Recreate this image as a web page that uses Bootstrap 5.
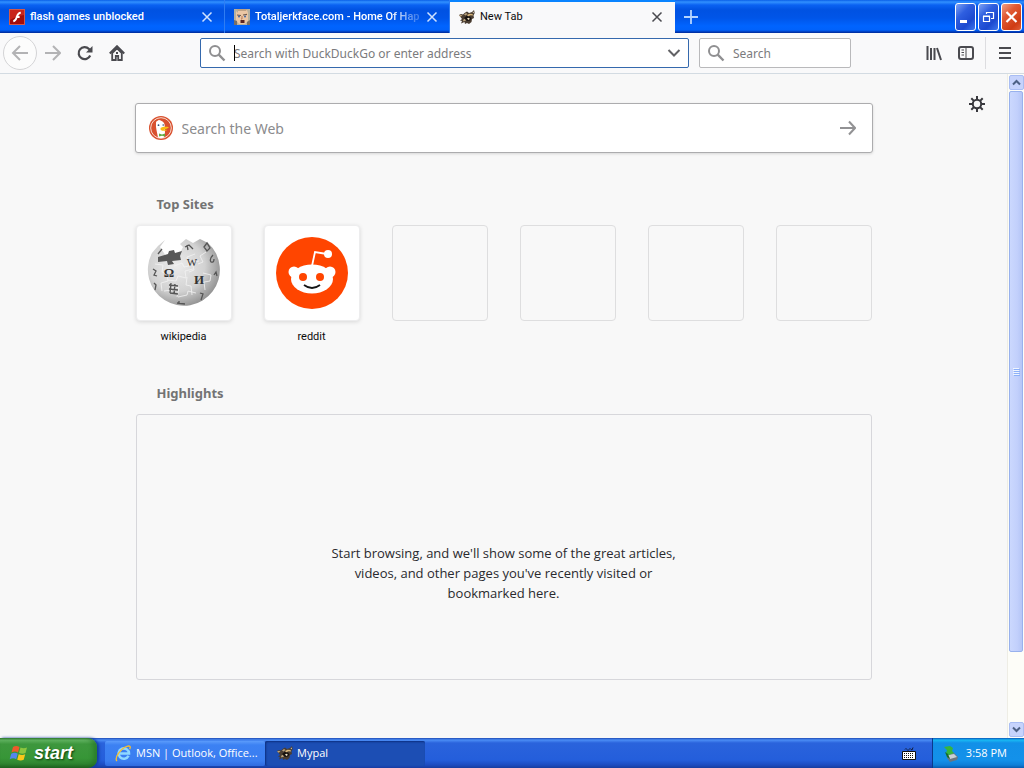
<!DOCTYPE html>
<html lang="en">
<head>
<meta charset="utf-8">
<meta name="viewport" content="width=device-width, initial-scale=1">
<title>New Tab</title>
<link rel="stylesheet" href="https://cdn.jsdelivr.net/npm/bootstrap@5.3.0/dist/css/bootstrap.min.css">
<style>
  body { font-family: "Noto Sans", "Open Sans", sans-serif; font-size: 12px; line-height: 16px; background: #f8f8f8; color: #0c0c0d; }
  button { font: inherit; }
  svg { display: block; flex: none; }
  .plain { background: none; border: 0; padding: 0; color: inherit; display: flex; align-items: center; justify-content: center; }
  .ui { font-family: "Open Sans", "Noto Sans", sans-serif; font-size: 11px; line-height: 16px; white-space: nowrap; }
  .ui.slim { font-family: Roboto, "Open Sans", sans-serif; }

  .tabstrip { height: 33px; background: linear-gradient(#0a5fe8 0, #3190ff 2px, #0a62f2 5px, #0052e2 10px, #0055e8 18px, #0064ff 26px, #0062fb 30px, #0038b4 32px, #002a98 33px); }
  .tab { width: 225px; height: 33px; padding: 1px 11px 0 9px; color: #fff; border-right: 1px solid #2f7df2; }
  .tab .name { flex: 1 1 0; min-width: 0; font-weight: 500; padding-left: 5px; }
  .tab .fade-end { -webkit-mask-image: linear-gradient(90deg, #000 80%, #0004 94%); mask-image: linear-gradient(90deg, #000 80%, #0004 94%); }
  .tab.on { background: #f9f9fa; color: #0c0c0d; border-top: 2px solid #0a84ff; border-right: 0; padding: 0 12px 2px 9px; }
  .tab.on .name { font-weight: 400; }
  .tab .plain { color: #cfe2ff; }
  .tab.on .plain { color: #4a4a4f; }
  .winbtns { gap: 2px; padding-right: 2px; }
  .winbtn { width: 21px; height: 28px; border: 1px solid #fff; border-radius: 3px; background: linear-gradient(135deg, #7ea2f4, #2f5fe0 35%, #1c49cf 70%, #3c77ee); color: #fff; }
  .winbtn.shut { background: linear-gradient(135deg, #f0a088, #e05a34 35%, #cf3c14 75%, #e0603a); }

  .toolbar { height: 41px; background: #f9f9fa; border-bottom: 1px solid #d3dbe2; color: #4a4a4f; padding: 0 3px; }
  .back { width: 34px; height: 34px; border: 1px solid #d4d4d6; border-radius: 50%; background: #fcfcfc; color: #b3b3b5; }
  .forward { color: #b3b3b5; }
  .field { height: 30px; background: #fff; border: 1px solid #b9b9bb; border-radius: 2px; padding: 0 7px; }
  .field input, .websearch input { border: 0; outline: 0; padding: 2px 0 0; background: none; min-width: 0; flex: 1; }
  .field input::placeholder { color: #7b7b7d; opacity: 1; }
  .field.active { border-color: #3569ad; margin-left: 75px; }
  .field.finder { width: 152px; flex: none; margin: 0 10px; }
  .caret { position: absolute; left: 0; top: 1px; width: 1px; height: 16px; background: #000; }
  .tools { padding-left: 65px; }
  .rule { width: 1px; height: 32px; margin: 0 11px; background: #dddde0; }

  .gear { color: #38383d; margin: 22px 22px 0 0; }
  .page-col { width: 738px; max-width: 80%; padding-top: 29px; }
  .websearch { height: 50px; background: #fff; border: 1px solid #acacae; border-radius: 3px; box-shadow: 0 1px 3px #0002; padding: 0 16px 0 13px; }
  .websearch input { font-size: 14px; padding-left: 9px; }
  .websearch input::placeholder { color: #8b8b8d; opacity: 1; }
  section { margin-top: 42px; }
  section + section { margin-top: 39px; }
  h2 { font-size: 13px; line-height: 18px; font-weight: 700; color: #737373; margin: 0 0 12px; padding-left: 22px; }
  .sites { display: grid; grid-template-columns: repeat(6, 96px); justify-content: space-between; padding: 0 1px; }
  .tile { height: 96px; border: 1px solid #dededf; border-radius: 4px; display: flex; align-items: center; justify-content: center; }
  .tile.full { background: #fff; border-color: #ededee; box-shadow: 0 1px 4px #0002; }
  .site { color: #0c0c0d; text-decoration: none; text-align: center; }
  .highlights { min-height: 266px; border: 1px solid #d7d7db; border-radius: 3px; margin: 0 1px; }
  .highlights p { font-family: "Open Sans", "Noto Sans", sans-serif; font-size: 13px; width: 350px; line-height: 20px; margin: 52px 0 0; color: #2a2a2e; }

  .scroll { width: 17px; background: #fdfdf8; border-left: 1px solid #eeede5; padding: 1px 0 1px 1px; }
  .scroll button { height: 15px; width: 15px; background: #c6d3fc; border: 1px solid #a9bdf3; border-radius: 2px; color: #4d6185; }
  .thumb { flex: 88 1 0; width: 14px; margin-top: 1px; border: 1px solid #98b1ed; border-radius: 2px; background: linear-gradient(90deg, #cbd8fe, #c2d0fc 60%, #b5c6f6); }
  .groove { flex: 11 1 0; }

  .taskbar { height: 30px; color: #fff; background: linear-gradient(#1f4bb5 0, #4b8df5 2px, #2a63dc 5px, #245edb 22px, #1d4cc0 27px, #173c9e 30px); }
  .start { width: 97px; height: 30px; color: #fff; border-radius: 0 9px 9px 0; padding: 0 0 0 9px; background: linear-gradient(#327a32 0, #63b563 2px, #3d973d 6px, #379637 20px, #2e8430 26px, #1d5f1e 30px); box-shadow: inset -4px 0 4px #1f6c2088, 2px 0 3px #123c9c; font: italic bold 18px/28px "Liberation Sans", sans-serif; text-shadow: 1px 1px 2px #0a3a0a; }
  .task { width: 160px; height: 25px; color: #fff; border-radius: 2px; padding: 0 0 0 10px; background: linear-gradient(#5b9bfb 0, #3c81f3 4px, #3a7df0 20px, #2f6be0 25px); }
  .task.on { background: #1c4eb4; box-shadow: inset 1px 1px 2px #0c2f80; }
  .task.on { padding-left: 12px; }
  .tray { width: 92px; height: 30px; padding: 0 17px 0 9px; border-left: 1px solid #0a3a8c; background: linear-gradient(#0a55b8 0, #19b9f3 2px, #1290e8 5px, #1391ea 22px, #0f7fd8 27px, #095bae 30px); }
</style>
</head>
<body class="d-flex flex-column min-vh-100">

<svg width="0" height="0" class="position-absolute" aria-hidden="true">
  <symbol id="x" viewBox="0 0 12 12"><path d="M1.500 1.500l9 9m0-9l-9 9" fill="none" stroke="currentColor" stroke-width="1.500"/></symbol>
  <symbol id="lens" viewBox="0 0 18 18"><circle cx="7" cy="7" r="5" fill="none" stroke="#8f8f91" stroke-width="2"/><path d="M10.700 10.700l5.800 5.800" stroke="#8f8f91" stroke-width="2.400"/></symbol>
  <symbol id="raccoon" viewBox="0 0 16 16">
    <path d="M0 6l2-1 2 .5L5.500 4 8 2.500 10 4l3-1 2-2 .7 3-1.200 2.500.5 2.500-2 1-.5 3-2.500 2-2-1-2 1-.5-2L2 14.500 3 12l-2-.5 2-1.500z" fill="#4a3d31"/>
    <path d="M0 6.500l2-.8 1.500.8-2 1.200zM4 11l2-1.500 1 2-2.500 1zM5 5.500l2-1.500 1.500 1-2 1.500z" fill="#b9a27c"/>
    <path d="M5 9l2.500-2 3.500.5 1.500 2-1.500 2-3 .5z" fill="#17120f"/>
    <path d="M8 6l2.500-1.300 3 .3.500 1.500-2.500-.2-2.300 1z" fill="#d9b77b"/>
    <path d="M13.500 3.500l1.200-1 .1 1.700zM8 9.300l2-.6.800 1.200-1.500 1z" fill="#efe2c4"/>
  </symbol>
</svg>

<header>
  <div class="tabstrip d-flex ui slim">
    <div class="tab d-flex align-items-center">
      <svg width="16" height="16" viewBox="0 0 16 16"><rect x=".5" y=".5" width="15" height="15" fill="#a30d0a" stroke="#d25a4b"/><path d="M1 1h14v5Q7 7 1 11z" fill="#c8241b"/><path d="M11.800 3.700C8.800 3.800 8.300 6.400 7.600 8.500 7 10.600 6.400 11.900 4.300 12.300M7 8h3.600" fill="none" stroke="#fff" stroke-width="1.900"/></svg>
      <span class="name">flash games unblocked</span>
      <button class="plain" aria-label="Close tab"><svg width="12" height="12"><use href="#x"/></svg></button>
    </div>
    <div class="tab d-flex align-items-center">
      <svg width="16" height="16" viewBox="0 0 16 16"><path fill="#b5b0a0" d="M0 0h16v16H0z"/><path d="M2 2l2 2V1h9l1 3v8l-3 3H5l-3-4z" fill="#ecc7a5"/><path d="M3 0h10l-1 2H4z" fill="#c0a284"/><path d="M3 6l4 .5M9 6l4-.6" stroke="#6f5a4c" stroke-width="1.200"/><circle cx="5" cy="7.600" r="1" fill="#3e64a4"/><circle cx="11" cy="7.600" r="1" fill="#3e64a4"/><path d="M8 7v3H7" fill="none" stroke="#b67958"/><path d="M6.500 11h4v3h-4z" fill="#5b2421"/><path d="M0 11l3 1v4H0zM16 11l-3 2v3h3z" fill="#786f68"/></svg>
      <span class="name fade-end">Totaljerkface.com - Home Of Hap</span>
      <button class="plain" aria-label="Close tab"><svg width="12" height="12"><use href="#x"/></svg></button>
    </div>
    <div class="tab on d-flex align-items-center">
      <svg width="16" height="16"><use href="#raccoon"/></svg>
      <span class="name">New Tab</span>
      <button class="plain" aria-label="Close tab"><svg width="12" height="12"><use href="#x"/></svg></button>
    </div>
    <button class="plain px-2" aria-label="Open a new tab"><svg width="16" height="16" viewBox="0 0 16 16"><path d="M8 1v14M1 8h14" stroke="#b5d4ff" stroke-width="1.800"/></svg></button>
    <div class="winbtns d-flex align-items-center ms-auto flex-shrink-0">
      <button class="plain winbtn" aria-label="Minimize"><svg width="19" height="26" viewBox="0 0 19 26"><path d="M4 16h7v3H4z" fill="#fff"/></svg></button>
      <button class="plain winbtn" aria-label="Restore"><svg width="19" height="26" viewBox="0 0 19 26"><path d="M7.500 10V8.500h7v6H12M4.500 12.500h6v5h-6zM4 12h7M7 8.500h8" fill="none" stroke="#fff" stroke-width="1.200"/></svg></button>
      <button class="plain winbtn shut" aria-label="Close"><svg width="19" height="26" viewBox="0 0 19 26"><path d="M4.500 8l10 10m0-10l-10 10" stroke="#fff" stroke-width="2.200"/></svg></button>
    </div>
  </div>

  <nav class="toolbar d-flex align-items-center" aria-label="Browser">
    <button class="plain back" aria-label="Back"><svg width="18" height="16" viewBox="0 0 18 16"><path d="M9 1L2 8l7 7M2 8h15" fill="none" stroke="currentColor" stroke-width="2"/></svg></button>
    <button class="plain forward ms-2" aria-label="Forward"><svg width="16" height="16" viewBox="0 0 16 16"><path d="M8 1l7 7-7 7M15 8H0" fill="none" stroke="currentColor" stroke-width="2"/></svg></button>
    <button class="plain ms-3" aria-label="Reload"><svg width="16" height="16" viewBox="0 0 16 16"><path d="M13.200 10.500A6 6 0 1 1 12 4l1.500 1.500" fill="none" stroke="currentColor" stroke-width="2.200"/><path d="M15.500 1v6.500H9z" fill="currentColor"/></svg></button>
    <button class="plain ms-3" aria-label="Home"><svg width="16" height="16" viewBox="0 0 16 16"><path d="M.8 8.500L8 1.300l7.200 7.200" fill="none" stroke="currentColor" stroke-width="2.100"/><path d="M3.200 8v7h3.600v-4h2.400v4h3.600V8L8 3.400z" fill="none" stroke="currentColor" stroke-width="1.800"/><path d="M7 7h2v2H7z" fill="currentColor"/></svg></button>
    <div class="field active d-flex align-items-center flex-grow-1">
      <svg width="18" height="18"><use href="#lens"/></svg>
      <div class="d-flex flex-grow-1 position-relative ms-2"><input type="text" aria-label="Address" placeholder="Search with DuckDuckGo or enter address"><span class="caret"></span></div>
      <button class="plain" aria-label="Show history"><svg width="14" height="10" viewBox="0 0 14 10"><path d="M1.500 2L7 7.500 12.500 2" fill="none" stroke="#626265" stroke-width="2"/></svg></button>
    </div>
    <div class="field finder d-flex align-items-center">
      <svg width="18" height="18"><use href="#lens"/></svg>
      <input type="text" class="ms-1 ps-1" aria-label="Search" placeholder="Search">
    </div>
    <div class="tools d-flex align-items-center">
      <button class="plain" aria-label="Library"><svg width="16" height="16" viewBox="0 0 16 16"><path d="M1.500 1v14M5 3v12M8.500 3v12M11 3l4 12" fill="none" stroke="currentColor" stroke-width="2"/></svg></button>
      <button class="plain ms-3" aria-label="Sidebars"><svg width="16" height="16" viewBox="0 0 16 16"><rect x="1" y="2" width="14" height="12" rx="2" fill="none" stroke="currentColor" stroke-width="2"/><path d="M8 2v12M3.500 5H6M3.500 7.500H6M3.500 10H6" stroke="currentColor"/></svg></button>
      <span class="rule"></span>
      <button class="plain me-2" aria-label="Menu"><svg width="16" height="16" viewBox="0 0 16 16"><path d="M2 3h12M2 8h12M2 13h12" stroke="currentColor" stroke-width="2"/></svg></button>
    </div>
  </nav>
</header>

<div class="d-flex flex-grow-1">
  <main class="flex-grow-1 position-relative">
    <button class="plain gear position-absolute top-0 end-0" aria-label="Settings"><svg width="16" height="16" viewBox="0 0 16 16"><circle cx="8" cy="8" r="4.200" fill="none" stroke="currentColor" stroke-width="2"/><path d="M8 0v4M8 12v4M0 8h4M12 8h4M2.300 2.300l2.800 2.800M10.900 10.900l2.800 2.800M13.700 2.300l-2.800 2.800M5.100 10.900l-2.800 2.800" stroke="currentColor" stroke-width="2"/></svg></button>
    <div class="page-col mx-auto">
      <form class="websearch d-flex align-items-center" onsubmit="return false">
        <svg width="24" height="24" viewBox="0 0 24 24"><circle cx="12" cy="12" r="12" fill="#d9512f"/><circle cx="12" cy="12" r="10.300" fill="none" stroke="#f6d9cd" stroke-width="1"/><path d="M9 21.500C8 16 6.500 11 7 8c-.4-2 1-3.500 3-3.500 3 0 5.500 1.500 5.700 5l.3 8-1 4q-3 1-6 0z" fill="#fff"/><path d="M7 6l3-2 2 1z" fill="#fff"/><circle cx="9.500" cy="9.200" r=".9" fill="#315177"/><circle cx="14.200" cy="9" r=".8" fill="#315177"/><path d="M11.500 12c2-1.500 6-1.500 8.500-.8-1 1.300-3.500 1.800-5 1.900 1 .7 2.500.7 3 .9-1.500 1.300-5 1-6.300 0z" fill="#f9bd13"/><path d="M10 17.500l3 1 3-1v3l-3-.8-3 .8z" fill="#62ae42"/></svg>
        <input type="text" aria-label="Search the Web" placeholder="Search the Web">
        <button class="plain" aria-label="Search"><svg width="16" height="16" viewBox="0 0 16 16"><path d="M9 1.500L15 8l-6 6.500M15 8H0" fill="none" stroke="#929294" stroke-width="2"/></svg></button>
      </form>

      <section>
        <h2>Top Sites</h2>
        <div class="sites ui slim">
          <a href="#" class="site">
            <span class="tile full mb-2"><svg width="76" height="76" viewBox="0 0 76 76">
              <defs><radialGradient id="g" cx=".4" cy=".4" r=".65"><stop offset="0" stop-color="#ececec"/><stop offset=".6" stop-color="#d2d2d2"/><stop offset="1" stop-color="#8e8e8e"/></radialGradient></defs>
              <path d="M19 5L14 12 20 21 34 18 37 12 34 9 40 4 47 8 54 4 62 8A36 36 0 1 1 6 18Q12 10 19 5z" fill="url(#g)"/>
              <path d="M12 22l10-3 1-3 5-1 1 3 7-2-2 5 1 4-9 1 2 3-6 1-1-4-9 1z" fill="#585858"/>
              <path d="M28 31l8-3 2 4 5-1-2-9 8-3M9 29l8 1-1 7 5 2 1 7-7 2 1 8M22 45l8 1 2-5 8 2-1-7 8-2M41 42l-1 8 5 1 1 9M53 26l-7 1 2 8-5 2M57 38l8 2-1 6-6 1 1 8M18 56l8-1 1-4 6 2-2 9M32 62l9-2 1-4 8 2M60 17l-6 4 3 6-5 2" fill="none" stroke="#f3f3f3" stroke-width=".8"/>
              <g fill="#333" font-family="Liberation Serif, serif" text-anchor="middle">
                <text x="23" y="42" font-size="13" font-weight="bold">Ω</text><text x="46" y="31" font-size="11">W</text><text x="53" y="49" font-size="13" font-weight="bold">И</text>
              </g>
              <path d="M23 50l9 1m-9 3l9 1m-8 3l8 1M25 48l-1 10M29 49l-1 10M54 58l3 1-2 6M67 20q-4 4-2 7 3 1 3-3M58 12l3-4 3 5-3 3zM39 12l4-2 4 4m-5 1l-1-5M7 34l3 2-2 4 3 1M8 48l2 2-1 5M12 19l4-5M31 68l8 1m-6-3v3M68 40l2-3 1 4" fill="none" stroke="#555" stroke-width="1.300"/>
            </svg></span>wikipedia</a>
          <a href="#" class="site">
            <span class="tile full mb-2"><svg width="72" height="72" viewBox="0 0 72 72"><circle cx="36" cy="36" r="36" fill="#ff4500"/><path d="M36 29l3-14 12 2" fill="none" stroke="#fff" stroke-width="1.800"/><circle cx="52" cy="17" r="4" fill="#fff"/><circle cx="18" cy="35" r="5.500" fill="#fff"/><circle cx="54" cy="35" r="5.500" fill="#fff"/><ellipse cx="36" cy="42" rx="21" ry="14.500" fill="#fff"/><circle cx="27" cy="40" r="4" fill="#ff4500"/><circle cx="44" cy="40" r="4" fill="#ff4500"/><path d="M28 48q8 6 16 0" fill="none" stroke="#151515" stroke-width="1.800"/></svg></span>reddit</a>
          <span class="tile"></span>
          <span class="tile"></span>
          <span class="tile"></span>
          <span class="tile"></span>
        </div>
      </section>

      <section>
        <h2>Highlights</h2>
        <div class="highlights d-flex align-items-center justify-content-center text-center">
          <p>Start browsing, and we'll show some of the great articles, videos, and other pages you've recently visited or bookmarked here.</p>
        </div>
      </section>
    </div>
  </main>

  <div class="scroll d-flex flex-column">
    <button class="plain" aria-label="Scroll up"><svg width="9" height="7" viewBox="0 0 9 7"><path d="M1 5.500L4.500 2 8 5.500" fill="none" stroke="currentColor" stroke-width="2"/></svg></button>
    <div class="thumb d-flex align-items-center justify-content-center"><svg width="7" height="8" viewBox="0 0 7 8"><path d="M0 .5h6M0 2.500h6M0 4.500h6M0 6.500h6" stroke="#eef4fe"/><path d="M1 1.500h6M1 3.500h6M1 5.500h6M1 7.500h6" stroke="#8cb0f8"/></svg></div>
    <div class="groove"></div>
    <button class="plain" aria-label="Scroll down"><svg width="9" height="7" viewBox="0 0 9 7"><path d="M1 1.500L4.500 5 8 1.500" fill="none" stroke="currentColor" stroke-width="2"/></svg></button>
  </div>
</div>

<footer class="taskbar d-flex align-items-center ui">
  <button class="plain start justify-content-start"><svg width="21" height="20" viewBox="0 0 21 20" class="me-1"><path d="M4 4q3-2 6.500 0L9 9.500Q6 7.700 2.500 9.500z" fill="#ee5a2b"/><path d="M11.500 4.500q3 1.500 6.500 0L16.500 10q-3 1.500-6.500 0z" fill="#8cc63f"/><path d="M2.200 10.700q3.500-1.800 6.500 0l-1.500 5.500q-3-1.800-6.500 0z" fill="#5386ef"/><path d="M9.700 11.200q3.500 1.500 6.500 0l-1.500 5.500q-3 1.500-6.500 0z" fill="#fbc71a"/></svg>start</button>
  <button class="plain task justify-content-start ms-2"><svg width="17" height="17" viewBox="0 0 17 17" class="me-1"><path d="M13.500 10.800A5.200 5.200 0 1 1 14 8.500H5" fill="none" stroke="#8fd8ff" stroke-width="2.600"/><path d="M2 16C-1 13 6 3 12 1.300c3-.8 4 .4 2.600 2.900" fill="none" stroke="#f5bd32" stroke-width="1.400"/></svg>MSN | Outlook, Office...</button>
  <button class="plain task on justify-content-start"><svg width="16" height="16" class="me-1"><use href="#raccoon"/></svg>Mypal</button>
  <svg width="14" height="14" viewBox="0 0 14 14" class="ms-auto me-3" role="img" aria-label="Keyboard"><path d="M3 3.500q1-2 2 0t2 0 2 0 2-2" fill="none" stroke="#101c3c"/><path d="M.5 5.500h13v8H.5z" fill="#fff" stroke="#111"/><path d="M2 7.500h10M2 9.500h10M2 11.500h10" stroke="#111" stroke-dasharray="1 1"/></svg>
  <div class="tray d-flex align-items-center justify-content-between">
    <svg width="17" height="17" viewBox="0 0 17 17" role="img" aria-label="Safely remove hardware"><path d="M5 9l7-1 4 4-1 3-7 2-3-4z" fill="#6b7680"/><path d="M6 10l6-1 3 3-7 2z" fill="#c9d0d4"/><path d="M2 2l6-1 3 2-1 3 2 2-5 2-3-2 1-3z" fill="#37b53b"/><path d="M3 7l3 2 2 5-3-2z" fill="#176e27"/></svg>
    <time>3:58 PM</time>
  </div>
</footer>

<script src="https://cdn.jsdelivr.net/npm/bootstrap@5.3.0/dist/js/bootstrap.bundle.min.js"></script>
</body>
</html>
